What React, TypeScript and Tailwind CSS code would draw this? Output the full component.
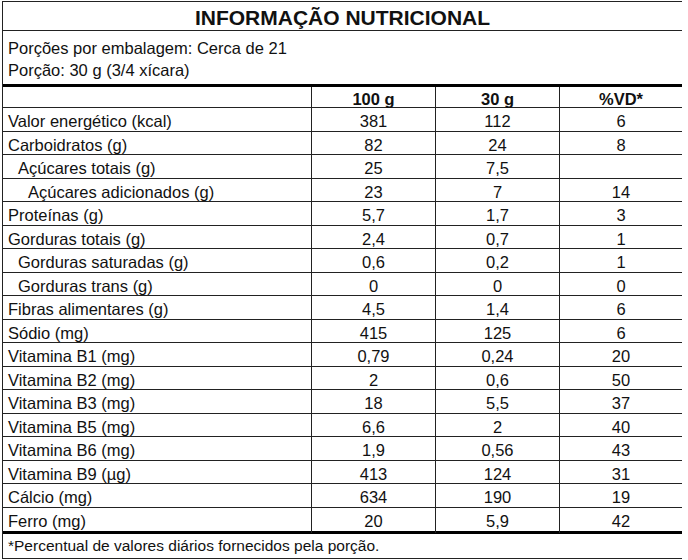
import React from "react";

type Row = [string, string, string, string, number];

const rows: Row[] = [
  ["Valor energético (kcal)", "381", "112", "6", 0],
  ["Carboidratos (g)", "82", "24", "8", 0],
  ["Açúcares totais (g)", "25", "7,5", "", 1],
  ["Açúcares adicionados (g)", "23", "7", "14", 2],
  ["Proteínas (g)", "5,7", "1,7", "3", 0],
  ["Gorduras totais (g)", "2,4", "0,7", "1", 0],
  ["Gorduras saturadas (g)", "0,6", "0,2", "1", 1],
  ["Gorduras trans (g)", "0", "0", "0", 1],
  ["Fibras alimentares (g)", "4,5", "1,4", "6", 0],
  ["Sódio (mg)", "415", "125", "6", 0],
  ["Vitamina B1 (mg)", "0,79", "0,24", "20", 0],
  ["Vitamina B2 (mg)", "2", "0,6", "50", 0],
  ["Vitamina B3 (mg)", "18", "5,5", "37", 0],
  ["Vitamina B5 (mg)", "6,6", "2", "40", 0],
  ["Vitamina B6 (mg)", "1,9", "0,56", "43", 0],
  ["Vitamina B9 (µg)", "413", "124", "31", 0],
  ["Cálcio (mg)", "634", "190", "19", 0],
  ["Ferro (mg)", "20", "5,9", "42", 0],
];

const indentClass = ["pl-[5px]", "pl-[15px]", "pl-[25px]"];

export default function App() {
  return (
    <div className="w-[688px] h-[560px] bg-white overflow-hidden pt-[1px] pl-[2px] text-[#111]" style={{ fontFamily: '"Liberation Sans", Arial, sans-serif' }}>
      <div className="w-[680px] border-l border-t border-b border-[#222]">
        {/* Title */}
        <div className="h-[29px] border-b border-[#222] flex items-center justify-center pt-[2px] text-[21px] font-bold leading-none">
          INFORMAÇÃO NUTRICIONAL
        </div>
        {/* Serving info */}
        <div className="h-[53px] pt-[6px] pl-[5px] text-[16.5px] leading-[22px]">
          <div>Porções por embalagem: Cerca de 21</div>
          <div>Porção: 30 g (3/4 xícara)</div>
        </div>
        <div className="h-[3px] bg-black" />
        {/* Header */}
        <div className="grid grid-cols-[309px_124px_124px_122px] h-[21px] border-b border-[#222] text-[16.5px] font-bold">
          <div className="border-r border-[#222]" />
          <div className="border-r border-[#222] flex items-center justify-center">100 g</div>
          <div className="border-r border-[#222] flex items-center justify-center">30 g</div>
          <div className="flex items-center justify-center">%VD*</div>
        </div>
        {/* Rows */}
        {rows.map((r, i) => {
          const last = i === rows.length - 1;
          return (
            <div
              key={r[0]}
              className={
                "grid grid-cols-[309px_124px_124px_122px] h-[23.5px] text-[16.5px] " +
                (last ? "" : "border-b border-[#222]")
              }
            >
              <div className={"border-r border-[#222] flex items-center pt-[1px] " + indentClass[r[4]]}>{r[0]}</div>
              <div className="border-r border-[#222] flex items-center justify-center pt-[1px]">{r[1]}</div>
              <div className="border-r border-[#222] flex items-center justify-center pt-[1px]">{r[2]}</div>
              <div className="flex items-center justify-center pt-[1px]">{r[3]}</div>
            </div>
          );
        })}
        <div className="h-[3px] bg-black" />
        {/* Footer */}
        <div className="h-[24px] flex items-center pl-[5px] text-[15.5px]">
          *Percentual de valores diários fornecidos pela porção.
        </div>
      </div>
    </div>
  );
}
